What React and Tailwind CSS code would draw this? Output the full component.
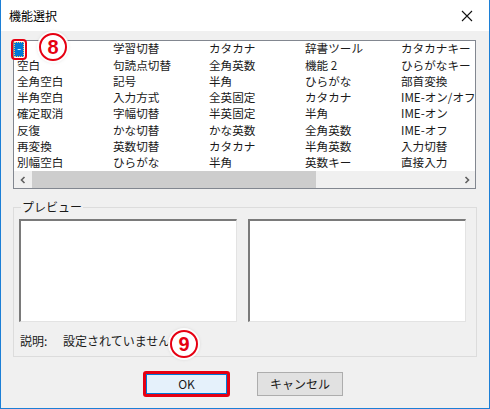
import React from "react";

const cols = [
  ["-", "空白", "全角空白", "半角空白", "確定取消", "反復", "再変換", "別幅空白"],
  ["学習切替", "句読点切替", "記号", "入力方式", "字幅切替", "かな切替", "英数切替", "ひらがな"],
  ["カタカナ", "全角英数", "半角", "全英固定", "半英固定", "かな英数", "カタカナ", "半角"],
  ["辞書ツール", "機能 2", "ひらがな", "カタカナ", "半角", "全角英数", "半角英数", "英数キー"],
  ["カタカナキー", "ひらがなキー", "部首変換", "IME-オン/オフ", "IME-オン", "IME-オフ", "入力切替", "直接入力"],
];

function Badge({ n, className }) {
  return (
    <div
      className={
        "absolute flex items-center justify-center w-[28px] h-[28px] rounded-full bg-white border-2 border-[#e60012] shadow-[0_0_0_2px_rgba(255,255,255,0.9),0_0_4px_rgba(0,0,0,0.25)] " +
        className
      }
    >
      <span className="text-[#e60012] text-[20px] font-bold leading-none font-['Liberation_Sans',sans-serif]">
        {n}
      </span>
    </div>
  );
}

export default function App() {
  return (
    <div
      className="relative w-[490px] h-[409px] bg-[#f0f0f0] border-l border-r border-b border-[#1c7fd6] text-[12px] text-[#1a1a1a] font-['Noto_Sans_CJK_JP','Noto_Sans',sans-serif] overflow-hidden"
    >
      {/* title bar */}
      <div className="h-[31px] bg-white flex items-center justify-between pl-[8px] pr-[16px]">
        <span className="text-[12px] text-black">機能選択</span>
        <svg width="12" height="12" viewBox="0 0 12 12" className="mt-[1px]">
          <path d="M1 1 L11 11 M11 1 L1 11" stroke="#111" strokeWidth="1.1" />
        </svg>
      </div>

      {/* list box */}
      <div className="ml-[12px] mt-[9px] w-[463px] h-[149px] border border-[#828790] bg-white flex flex-col text-[11.6px]">
        <div className="flex h-[130px]">
          {cols.map((col, ci) => (
            <div key={ci} className="w-[96px] shrink-0 flex flex-col">
              {col.map((t, ri) =>
                ci === 0 && ri === 0 ? (
                  <div key={ri} className="h-[16.3px] flex items-center">
                    <span className="h-[15px] w-[10px] flex items-center justify-center bg-[#0078d7] text-white leading-none outline-2 outline-[#e60012] outline-offset-[1px] rounded-[1px] border border-dotted border-[#f5c26b]">
                      -
                    </span>
                  </div>
                ) : (
                  <div key={ri} className="h-[16.3px] flex items-center pl-[3px] whitespace-nowrap leading-none">
                    {t}
                  </div>
                )
              )}
            </div>
          ))}
        </div>
        <div className="h-[17px] mt-auto flex items-center bg-[#f0f0f0]">
          <div className="w-[17px] h-[17px] flex items-center justify-center">
            <svg width="8" height="8" viewBox="0 0 8 8">
              <path d="M5.5 1 L2.5 4 L5.5 7" stroke="#606060" strokeWidth="1.6" fill="none" />
            </svg>
          </div>
          <div className="ml-[1px] w-[284px] h-[17px] bg-[#cdcdcd]" />
          <div className="flex-1" />
          <div className="w-[17px] h-[17px] flex items-center justify-center">
            <svg width="8" height="8" viewBox="0 0 8 8">
              <path d="M2.5 1 L5.5 4 L2.5 7" stroke="#606060" strokeWidth="1.6" fill="none" />
            </svg>
          </div>
        </div>
      </div>

      {/* group box */}
      <div className="relative ml-[12px] mt-[18px] w-[464px] h-[150px] border border-[#dcdcdc]">
        <span className="absolute left-[7px] top-[-9px] px-[1px] bg-[#f0f0f0] leading-[16px]">プレビュー</span>
        <div className="flex gap-[11px] pl-[5px] pt-[11px]">
          <div className="w-[218px] h-[103px] bg-white border-t-2 border-l-2 border-[#7a7a7a] border-b border-r border-b-[#e3e3e3] border-r-[#e3e3e3]" />
          <div className="w-[218px] h-[103px] bg-white border-t-2 border-l-2 border-[#7a7a7a] border-b border-r border-b-[#e3e3e3] border-r-[#e3e3e3]" />
        </div>
        <div className="flex items-center pl-[6px] mt-[11px] h-[16px]">
          <span className="w-[43px]">説明:</span>
          <span>設定されていません</span>
        </div>
      </div>

      {/* buttons */}
      <div className="flex mt-[14px] ml-[142px] gap-[27px]">
        <div className="rounded-[3px] border-[3px] border-[#e60012]">
          <button className="w-[81px] h-[20px] bg-[#e5f1fb] border border-[#0078d7] text-[12px] leading-none text-[#1a1a1a]">
            OK
          </button>
        </div>
        <button className="w-[86px] h-[24px] mt-[1px] bg-[#e1e1e1] border border-[#adadad] text-[12px] leading-none text-[#1a1a1a]">
          キャンセル
        </button>
      </div>

      <Badge n="8" className="left-[38px] top-[33px]" />
      <Badge n="9" className="left-[169px] top-[330px]" />
    </div>
  );
}
